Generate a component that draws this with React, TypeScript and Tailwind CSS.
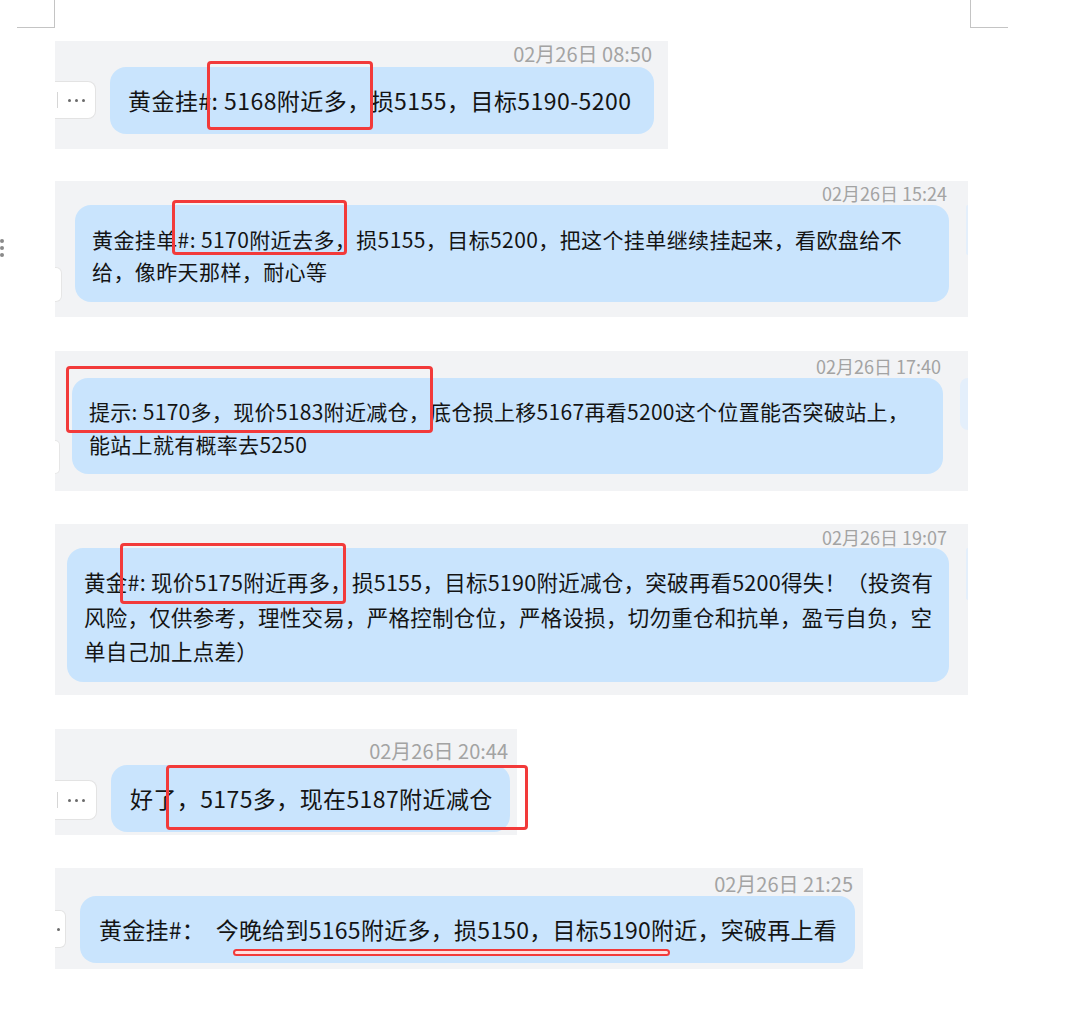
import React from "react";

type Line = string;

function Dots() {
  return (
    <div className="flex items-center gap-[4px]">
      <span className="w-[3px] h-[3px] rounded-full bg-[#6b6b6b]" />
      <span className="w-[3px] h-[3px] rounded-full bg-[#6b6b6b]" />
      <span className="w-[3px] h-[3px] rounded-full bg-[#6b6b6b]" />
    </div>
  );
}

function Stamp({ text, cls }: { text: string; cls: string }) {
  return <div className={"text-right text-[#a3a3a3] whitespace-nowrap " + cls}>{text}</div>;
}

function Bubble({ lines, cls }: { lines: Line[]; cls: string }) {
  return (
    <div className={"bg-[#c9e4fd] rounded-[16px] text-[#141414] shrink-0 " + cls}>
      {lines.map((l, i) => (
        <div key={i} className="whitespace-pre">
          {l}
        </div>
      ))}
    </div>
  );
}

function RedBox({ cls }: { cls: string }) {
  return <div className={"absolute border-[3px] border-[#f23a3a] rounded-[4px] " + cls} />;
}

export default function App() {
  return (
    <div className="w-[1071px] h-[1033px] bg-white overflow-hidden font-['Noto_Sans_CJK_SC','Noto_Sans',sans-serif]">
      {/* page corner marks */}
      <div className="flex h-[28px]">
        <div className="ml-[17px] w-[38px] h-[28px] border-r border-b border-[#c4c4c4]" />
        <div className="ml-[915px] w-[38px] h-[28px] border-l border-b border-[#c4c4c4]" />
      </div>

      <div className="flex flex-col mt-[13px]">
        {/* 1 */}
        <div className="flex">
          <div className="w-[55px] shrink-0" />
          <div className="relative bg-[#f2f3f5] w-[613px] h-[108px]">
            <Stamp text="02月26日 08:50" cls="h-[26px] leading-[26px] text-[20px] pr-[16px]" />
            <div className="flex items-start">
              <div className="mt-[14px] w-[41px] h-[38px] bg-white rounded-r-[8px] border border-l-0 border-[#e3e3e3] flex items-center">
                <span className="ml-[2px] w-[1px] h-[16px] bg-[#d6d6d6]" />
                <div className="ml-[10px]">
                  <Dots />
                </div>
              </div>
              <Bubble
                lines={["黄金挂#: 5168附近多，损5155，目标5190-5200"]}
                cls="ml-[14px] w-[544px] h-[67px] pl-[18px] text-[23px] leading-[67px] tracking-[0.45px]"
              />
            </div>
            <RedBox cls="left-[152px] top-[20px] w-[166px] h-[69px]" />
          </div>
        </div>

        {/* 2 */}
        <div className="flex mt-[32px]">
          <div className="w-[55px] shrink-0 pt-[58px] flex flex-col gap-[3px]">
            <span className="w-[4px] h-[4px] rounded-full bg-[#8a8a8a]" />
            <span className="w-[4px] h-[4px] rounded-full bg-[#8a8a8a]" />
            <span className="w-[4px] h-[4px] rounded-full bg-[#8a8a8a]" />
          </div>
          <div className="relative bg-[#f2f3f5] w-[913px] h-[136px]">
            <Stamp text="02月26日 15:24" cls="h-[24px] leading-[24px] text-[18px] pr-[21px]" />
            <div className="flex items-end">
              <div className="w-[7px] h-[35px] bg-white rounded-r-[6px] border border-l-0 border-[#e6e6e6]" />
              <Bubble
                lines={[
                  "黄金挂单#: 5170附近去多，损5155，目标5200，把这个挂单继续挂起来，看欧盘给不",
                  "给，像昨天那样，耐心等",
                ]}
                cls="ml-[13px] w-[874px] h-[97px] pl-[17px] pt-[18px] text-[21px] leading-[32px] tracking-[0.4px]"
              />
              <div className="self-start ml-[17px] w-[2px] h-[50px] bg-[#e4effb] rounded-l-[8px]" />
            </div>
            <RedBox cls="left-[117px] top-[19px] w-[175px] h-[55px]" />
          </div>
        </div>

        {/* 3 */}
        <div className="flex mt-[34px]">
          <div className="w-[55px] shrink-0" />
          <div className="relative bg-[#f2f3f5] w-[913px] h-[140px]">
            <Stamp text="02月26日 17:40" cls="pt-[3px] h-[27px] leading-[24px] text-[18px] pr-[27px]" />
            <div className="flex items-end">
              <div className="w-[5px] h-[34px] bg-white rounded-r-[6px] border border-l-0 border-[#e6e6e6]" />
              <Bubble
                lines={[
                  "提示: 5170多，现价5183附近减仓，底仓损上移5167再看5200这个位置能否突破站上，",
                  "能站上就有概率去5250",
                ]}
                cls="ml-[12px] w-[871px] h-[96px] pl-[17px] pt-[17px] text-[21px] leading-[33px] tracking-[0.3px]"
              />
              <div className="self-start ml-[17px] w-[8px] h-[52px] bg-[#e4effb] rounded-l-[10px]" />
            </div>
            <RedBox cls="left-[11px] top-[15px] w-[367px] h-[67px]" />
          </div>
        </div>

        {/* 4 */}
        <div className="flex mt-[33px]">
          <div className="w-[55px] shrink-0" />
          <div className="relative bg-[#f2f3f5] w-[913px] h-[171px]">
            <Stamp text="02月26日 19:07" cls="h-[24px] leading-[26px] text-[18px] pr-[21px]" />
            <div className="flex items-start">
              <Bubble
                lines={[
                  "黄金#: 现价5175附近再多，损5155，目标5190附近减仓，突破再看5200得失！（投资有",
                  "风险，仅供参考，理性交易，严格控制仓位，严格设损，切勿重仓和抗单，盈亏自负，空",
                  "单自己加上点差）",
                ]}
                cls="ml-[12px] w-[882px] h-[134px] pl-[17px] pt-[17px] text-[21.5px] leading-[34.5px] tracking-[0.25px]"
              />
              <div className="ml-[17px] w-[2px] h-[52px] bg-[#e4effb] rounded-l-[8px]" />
            </div>
            <RedBox cls="left-[65px] top-[19px] w-[226px] h-[61px]" />
          </div>
        </div>

        {/* 5 */}
        <div className="flex mt-[34px]">
          <div className="w-[55px] shrink-0" />
          <div className="relative bg-[#f2f3f5] w-[462px] h-[106px]">
            <Stamp text="02月26日 20:44" cls="pt-[9px] h-[36px] leading-[26px] text-[20px] pr-[9px]" />
            <div className="flex items-start">
              <div className="mt-[15px] w-[42px] h-[40px] bg-white rounded-r-[8px] border border-l-0 border-[#e3e3e3] flex items-center">
                <span className="ml-[2px] w-[1px] h-[16px] bg-[#d6d6d6]" />
                <div className="ml-[10px]">
                  <Dots />
                </div>
              </div>
              <Bubble
                lines={["好了，5175多，现在5187附近减仓"]}
                cls="ml-[14px] w-[399px] h-[67px] pl-[19px] text-[23px] leading-[67px] tracking-[0.4px]"
              />
            </div>
            <RedBox cls="left-[111px] top-[36px] w-[362px] h-[65px]" />
          </div>
        </div>

        {/* 6 */}
        <div className="flex mt-[33px]">
          <div className="w-[55px] shrink-0" />
          <div className="relative bg-[#f2f3f5] w-[808px] h-[101px]">
            <Stamp text="02月26日 21:25" cls="pt-[3px] h-[28px] leading-[26px] text-[20px] pr-[10px]" />
            <div className="flex items-start">
              <div className="mt-[14px] w-[11px] h-[38px] bg-white rounded-r-[6px] border border-l-0 border-[#e3e3e3] flex items-center">
                <span className="ml-[2px] w-[3px] h-[3px] rounded-full bg-[#6b6b6b]" />
              </div>
              <Bubble
                lines={["黄金挂#：  今晚给到5165附近多，损5150，目标5190附近，突破再上看"]}
                cls="ml-[14px] w-[775px] h-[67px] pl-[19px] text-[23px] leading-[67px] tracking-[0.25px]"
              />
            </div>
            <div className="absolute left-[178px] top-[81px] w-[437px] h-[7px] rounded-full border-2 border-[#f23a3a] bg-[#ffdede]" />
          </div>
        </div>
      </div>
    </div>
  );
}
